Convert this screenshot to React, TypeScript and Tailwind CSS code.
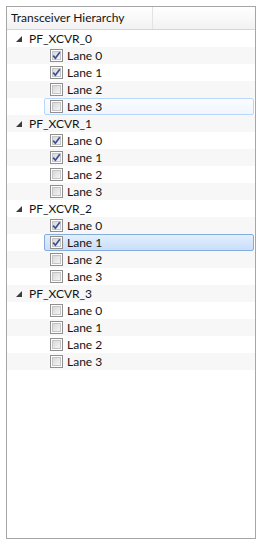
const groups = [
  { name: "PF_XCVR_0", lanes: [true, true, false, false] },
  { name: "PF_XCVR_1", lanes: [true, true, false, false] },
  { name: "PF_XCVR_2", lanes: [true, true, false, false] },
  { name: "PF_XCVR_3", lanes: [false, false, false, false] },
];

// which lane row is hovered / selected: "group-lane"
const hovered = "0-3";
const selected = "2-1";

function Expander() {
  return (
    <svg width="6" height="6" viewBox="0 0 6 6" className="block">
      <polygon points="6,0 6,6 0,6" fill="#3c3c3c" />
    </svg>
  );
}

function CheckBox({ checked }: { checked: boolean }) {
  return (
    <svg width="13" height="13" viewBox="0 0 13 13" className="block">
      <defs>
        <linearGradient id="cbfill" x1="0" y1="0" x2="1" y2="1">
          <stop offset="0" stopColor="#d6d6d6" />
          <stop offset="1" stopColor="#f6f6f6" />
        </linearGradient>
      </defs>
      <rect x="0.5" y="0.5" width="12" height="12" fill="#fdfdfd" stroke="#8f8f8f" />
      <rect x="2.5" y="2.5" width="8" height="8" fill="url(#cbfill)" stroke="#c4c4c4" />
      {checked && (
        <path
          d="M3.2 6.6 L5.4 9.2 L9.8 3.2"
          fill="none"
          stroke="#3a4f9a"
          strokeWidth="1.7"
        />
      )}
    </svg>
  );
}

function App() {
  let rowIndex = 0;

  const rows: JSX.Element[] = [];
  groups.forEach((group, g) => {
    const parentStripe = rowIndex % 2 === 1;
    rowIndex++;
    rows.push(
      <div
        key={group.name}
        className={`flex h-[17px] items-center ${parentStripe ? "bg-[#f7f7f7]" : "bg-white"}`}
      >
        <div className="ml-[9px] mr-[7px] mt-[1px]">
          <Expander />
        </div>
        <span>{group.name}</span>
      </div>,
    );
    group.lanes.forEach((checked, l) => {
      const stripe = rowIndex % 2 === 1;
      rowIndex++;
      const key = `${g}-${l}`;
      let box = "border-transparent";
      if (key === hovered) {
        box = "border-[#b9d7fb] bg-gradient-to-b from-[#fafcff] to-[#f0f6fe]";
      } else if (key === selected) {
        box = "border-[#84acdd] bg-gradient-to-b from-[#e3effd] to-[#c8defb]";
      }
      rows.push(
        <div
          key={key}
          className={`flex h-[17px] ${stripe ? "bg-[#f7f7f7]" : "bg-white"}`}
        >
          <div
            className={`ml-[37px] mr-[1px] flex flex-1 items-center rounded-[2px] border ${box}`}
          >
            <div className="ml-[5px] mr-[4px]">
              <CheckBox checked={checked} />
            </div>
            <span>Lane {l}</span>
          </div>
        </div>,
      );
    });
  });

  return (
    <div
      className="h-[550px] w-[258px] bg-white pb-[11px] pl-[6px] pr-[2px] pt-[6px] text-[12px] text-[#141414]"
      style={{ fontFamily: '"Lato", "Liberation Sans", sans-serif' }}
    >
      <div className="flex h-full flex-col border border-[#a6a6a6] bg-white">
        <div className="flex h-[23px] border-b border-[#d5d5d5] bg-gradient-to-b from-white to-[#f2f2f2]">
          <div className="flex w-[146px] items-center border-r border-[#e3e3e3] pl-[4px]">
            Transceiver Hierarchy
          </div>
          <div className="flex-1" />
        </div>
        <div className="flex flex-col">{rows}</div>
      </div>
    </div>
  );
}

export default App;
